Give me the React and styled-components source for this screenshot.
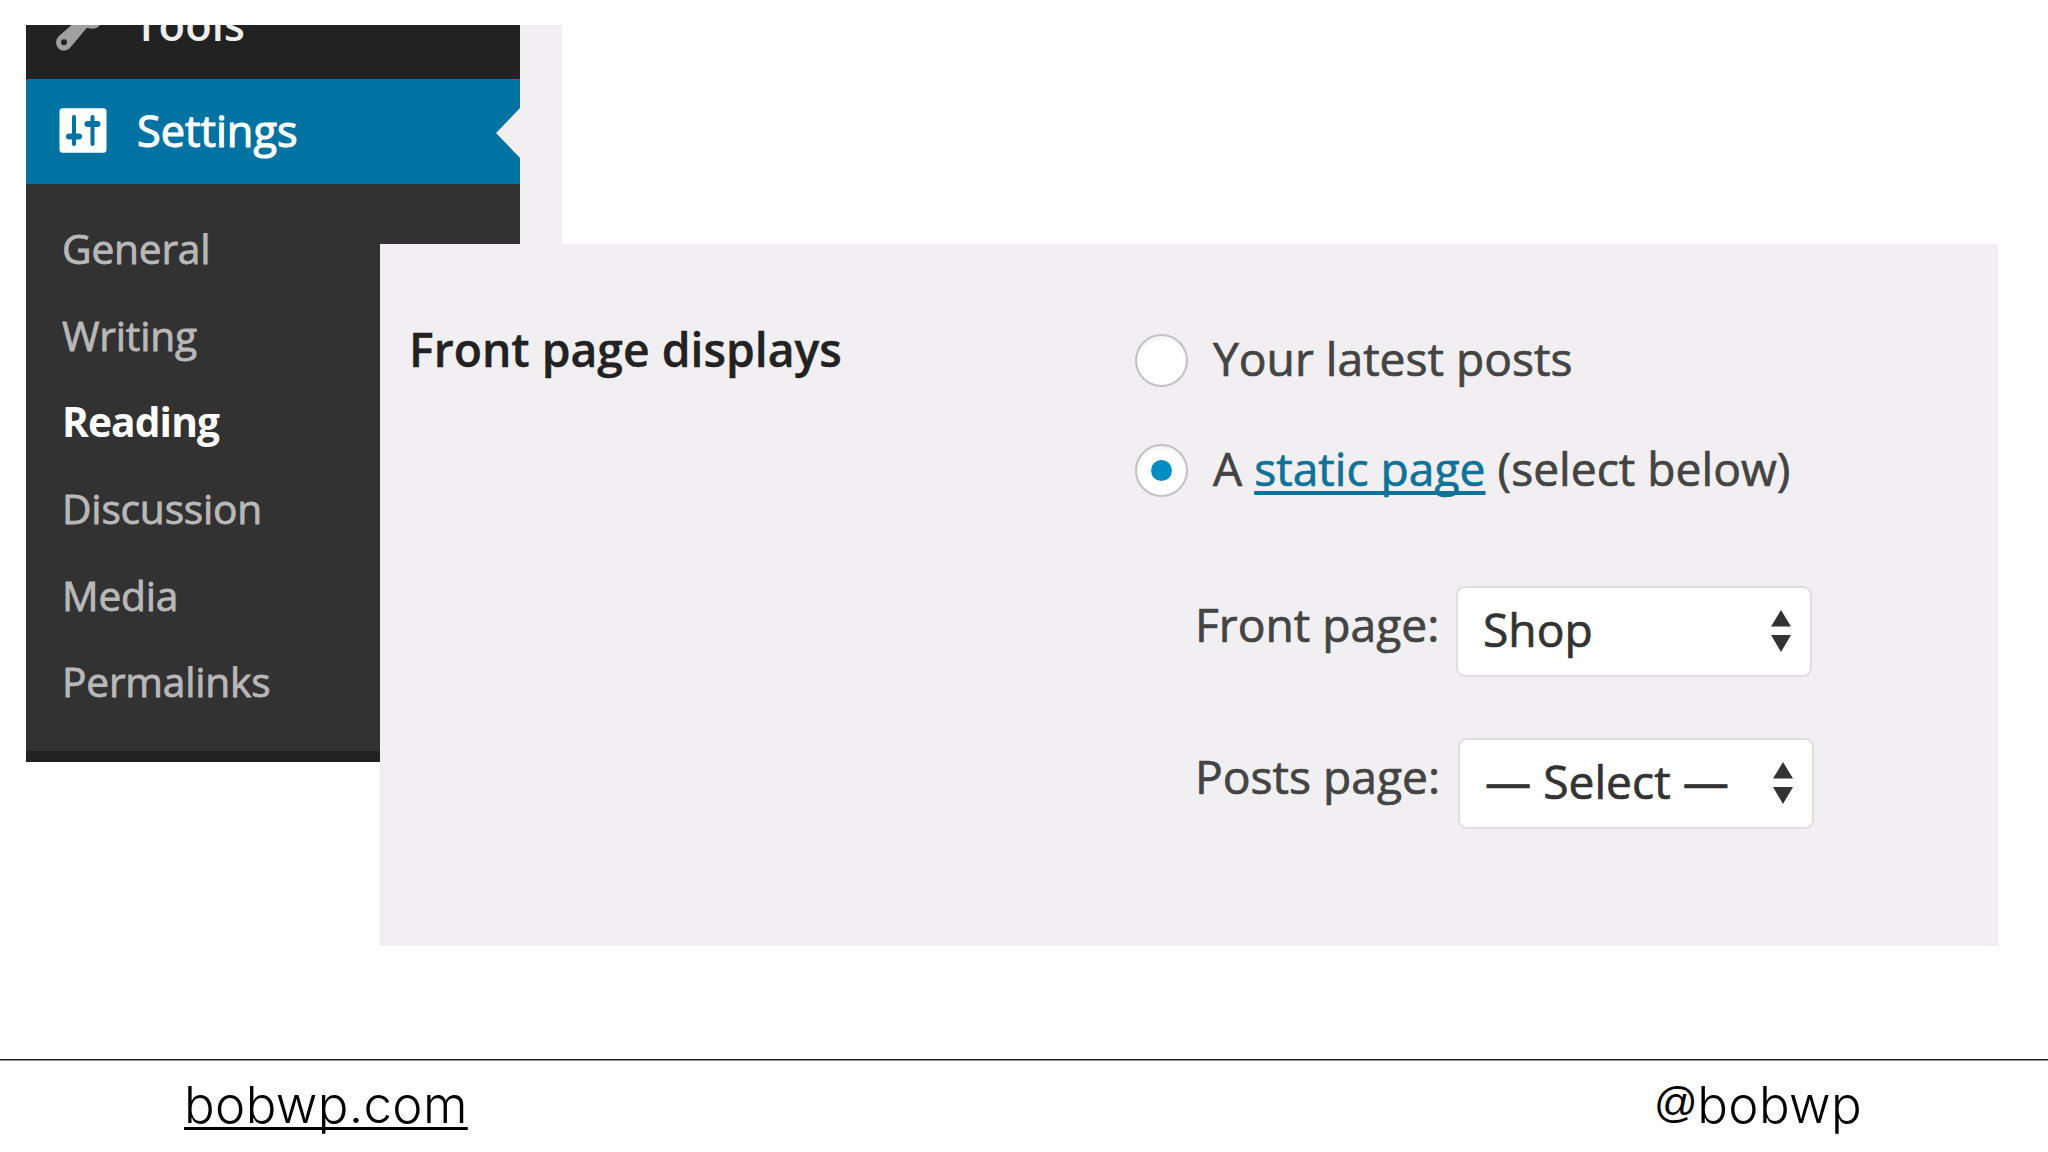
import React from 'react';
import styled, { createGlobalStyle } from 'styled-components';

const GlobalStyle = createGlobalStyle`
    * {
        box-sizing: border-box;
    }
    body {
        margin: 0;
        background: #fefefe;
        font-family: 'Open Sans', sans-serif;
        overflow: hidden;
    }
`

const submenu = [
    { label: 'General' },
    { label: 'Writing' },
    { label: 'Reading', current: true },
    { label: 'Discussion' },
    { label: 'Media' },
    { label: 'Permalinks' },
]

const WrenchIcon = () => (
    <svg width="50" height="30" viewBox="0 0 50 30">
        <path
            d="M15.500 0 L2.500 11.500 C-2.500 17 1 25.500 8 25.500 C12 25.500 14 23 16 20.500 L29 5 Q30 2.500 32 3 C36 4.500 41 4 44 0 Z"
            fill="#a0a0a0"
        />
        <circle cx="8" cy="17.300" r="3" fill="#222" />
    </svg>
)

const SlidersIcon = () => (
    <svg width="48" height="45" viewBox="0 0 48 45">
        <rect x="0.5" y="0.300" width="47" height="44.400" rx="3" fill="#fff" />
        <g fill="#0073a3">
            <rect x="13" y="7" width="4" height="31" rx="2" />
            <rect x="7" y="25.500" width="16" height="6" rx="3" />
            <rect x="31.500" y="7" width="4" height="31" rx="2" />
            <rect x="25.500" y="13" width="16" height="6" rx="3" />
        </g>
    </svg>
)

const UpDownIcon = () => (
    <svg width="20" height="42" viewBox="0 0 20 42">
        <path d="M10 0 L20 16.500 H0 Z M0 25 H20 L10 42 Z" fill="#333" />
    </svg>
)

export default function App() {
    return (
        <>
            <GlobalStyle />
            <Slide>
                <Sidebar>
                    <ToolsItem>
                        <WrenchIcon />
                        <ToolsLabel>Tools</ToolsLabel>
                    </ToolsItem>
                    <SettingsItem>
                        <SlidersIcon />
                        <SettingsLabel>Settings</SettingsLabel>
                    </SettingsItem>
                    <Submenu>
                        {submenu.map(item => (
                            <SubmenuItem key={item.label} $current={item.current}>
                                {item.label}
                            </SubmenuItem>
                        ))}
                    </Submenu>
                </Sidebar>
                <Gutter />
                <Panel>
                    <PanelTitle>Front page displays</PanelTitle>
                    <Options>
                        <RadioRow>
                            <Radio />
                            <RadioLabel>Your latest posts</RadioLabel>
                        </RadioRow>
                        <RadioRow>
                            <Radio $checked />
                            <RadioLabel>A <Link>static page</Link> (select below)</RadioLabel>
                        </RadioRow>
                        <SelectRow>
                            <SelectLabel>Front page:</SelectLabel>
                            <SelectBox>
                                <span>Shop</span>
                                <UpDownIcon />
                            </SelectBox>
                        </SelectRow>
                        <SelectRow>
                            <SelectLabel $wide>Posts page:</SelectLabel>
                            <SelectBox>
                                <span>— Select —</span>
                                <UpDownIcon />
                            </SelectBox>
                        </SelectRow>
                    </Options>
                </Panel>
                <Footer>
                    <Site>bobwp.com</Site>
                    <Handle><At>@</At>bobwp</Handle>
                </Footer>
            </Slide>
        </>
    )
}

const Slide = styled.div`
    display: grid;
    width: 2048px;
    height: 1152px;
    grid-template-columns: 354px 140px 42px 1436px;
    grid-template-rows: 219px 518px 184px 113px 93px;
    padding: 25px 50px 0 26px;
`

const Sidebar = styled.nav`
    grid-area: 1 / 1 / 3 / 3;
    display: flex;
    flex-direction: column;
    background: #222;
`

const ToolsItem = styled.div`
    display: flex;
    height: 54px;
    padding-left: 30px;
    overflow: hidden;
`

const ToolsLabel = styled.span`
    margin-left: 28px;
    margin-top: -30px;
    height: 60px;
    line-height: 60px;
    font-size: 43.5px;
    font-weight: 600;
    color: #eee;
`

const SettingsItem = styled.div`
    position: relative;
    display: flex;
    align-items: center;
    height: 105px;
    padding: 0 0 2px 33px;
    background: #0073a3;
    color: #fff;
    &::after {
        content: '';
        position: absolute;
        right: 0;
        top: 29px;
        border: solid transparent;
        border-width: 25px 24px 25px 0;
        border-right-color: #f1eff1;
    }
`

const SettingsLabel = styled.span`
    margin-left: 30px;
    line-height: 60px;
    font-size: 43.3px;
    -webkit-text-stroke: 1.1px #fff;
`

const Submenu = styled.ul`
    height: 567px;
    margin: 0;
    padding: 21px 0 0 36px;
    list-style: none;
    background: #333233;
`

const SubmenuItem = styled.li`
    height: 86.7px;
    line-height: 86.7px;
    font-size: 40.7px;
    letter-spacing: ${props => (props.$current ? '-0.9px' : '-0.2px')};
    font-weight: ${props => (props.$current ? 700 : 400)};
    color: ${props => (props.$current ? '#fff' : '#b8b8b8')};
    -webkit-text-stroke: ${props => (props.$current ? 0 : '0.8px #b8b8b8')};
`

const Gutter = styled.div`
    grid-area: 1 / 3 / 2 / 4;
    background: #f1eff1;
`

const Panel = styled.section`
    grid-area: 2 / 2 / 4 / 5;
    display: flex;
    background: #f1eff1;
`

const PanelTitle = styled.h2`
    width: 755px;
    margin: 0;
    padding: 76px 0 0 29px;
    line-height: 60px;
    font-size: 46.3px;
    font-weight: 600;
    color: #222;
    -webkit-text-stroke: 0.4px;
`

const Options = styled.div`
    padding-top: 61px;
    color: #444;
    font-size: 46.2px;
    -webkit-text-stroke: 0.7px;
`

const RadioRow = styled.div`
    display: flex;
    align-items: center;
    height: 110px;
`

const Radio = styled.span`
    display: flex;
    align-items: center;
    justify-content: center;
    width: 53px;
    height: 53px;
    border: 2px solid #c2c1c3;
    border-radius: 50%;
    background: #fff;
    box-shadow: inset 0 3px 4px rgba(0, 0, 0, 0.05);
    &::after {
        content: '';
        width: 21px;
        height: 21px;
        border-radius: 50%;
        background: ${props => (props.$checked ? '#008ec2' : 'transparent')};
    }
`

const RadioLabel = styled.span`
    margin-left: 25px;
    line-height: 60px;
    margin-top: -3px;
    white-space: nowrap;
`

const Link = styled.a`
    color: #0f7299;
    text-decoration: underline;
    text-decoration-thickness: 4px;
    text-underline-offset: 5px;
    text-decoration-skip-ink: none;
`

const SelectRow = styled.div`
    display: flex;
    align-items: center;
    height: 91px;
    margin-top: 61px;
    padding-left: 60px;
`

const SelectLabel = styled.span`
    width: ${props => (props.$wide ? 263 : 261)}px;
    line-height: 60px;
    margin-top: -14px;
    white-space: nowrap;
`

const SelectBox = styled.div`
    display: flex;
    align-items: center;
    justify-content: space-between;
    width: 356px;
    height: 91px;
    padding: 0 19px 1px 25px;
    border: 2px solid #dfdedf;
    border-radius: 9px;
    background: #fff;
    color: #333;
    white-space: nowrap;
    span {
        line-height: 60px;
        margin-top: -3px;
    }
`

const Footer = styled.footer`
    grid-area: 5 / 1 / 6 / 5;
    display: flex;
    justify-content: space-between;
    margin: 0 -50px 0 -26px;
    padding: 14px 186px 0 184px;
    border-top: 1px solid #1c1a20;
    box-shadow: inset 0 1px #98969c;
    font-family: Inter, sans-serif;
    font-size: 51px;
    font-weight: 300;
    line-height: 62px;
    letter-spacing: 0.35px;
    color: #000;
`

const Site = styled.span`
    height: 62px;
    text-decoration: underline;
    text-decoration-thickness: 3px;
    text-underline-offset: 4px;
    text-decoration-skip-ink: none;
`

const Handle = styled.span`
    height: 62px;
`

const At = styled.span`
    font-family: 'Liberation Sans', sans-serif;
    font-size: 43px;
    line-height: 1;
    letter-spacing: -0.5px;
    vertical-align: 6px;
`
